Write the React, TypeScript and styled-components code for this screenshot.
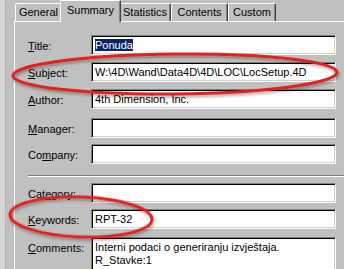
import React from "react";
import styled, { createGlobalStyle } from "styled-components";

const Global = createGlobalStyle`
  html, body {
    margin: 0;
    padding: 0;
    background: #c0c0c0;
    overflow: hidden;
  }
  body {
    font-family: "Liberation Sans", Arial, sans-serif;
    font-size: 11px;
    color: #000;
  }
`;

const Page = styled.div`
  position: relative;
  width: 344px;
  height: 269px;
  display: flex;
  overflow: hidden;
`;

const LeftStrip = styled.div`
  width: 5px;
  flex: none;
  background: #d6d6d6;
  border-right: 1px solid #b4b4b4;
`;

const Main = styled.div`
  flex: 1;
  padding-left: 8px;
  display: flex;
  flex-direction: column;
`;

const TabRow = styled.div`
  height: 24px;
  display: flex;
  align-items: flex-end;
  padding-left: 1px;
`;

const Tab = styled.div<{ $w: number; $active?: boolean }>`
  box-sizing: border-box;
  width: ${(p) => p.$w}px;
  height: ${(p) => (p.$active ? 22 : 18)}px;
  margin: 0 ${(p) => (p.$active ? -2 : 0)}px ${(p) => (p.$active ? -1 : 0)}px;
  position: relative;
  z-index: ${(p) => (p.$active ? 2 : 1)};
  background: #c0c0c0;
  border-top: 1px solid #fff;
  border-left: 1px solid #fff;
  border-right: 1px solid #404040;
  box-shadow: inset -1px 0 #808080;
  border-radius: 2px 2px 0 0;
  padding-top: ${(p) => (p.$active ? 3 : 2)}px;
  text-align: center;
  white-space: nowrap;
`;

const Panel = styled.div`
  flex: 1;
  border-top: 1px solid #fff;
  border-left: 1px solid #fff;
  margin-right: -20px;
  padding: 13px 0 0 13px;
  display: flex;
  flex-direction: column;
`;

const Row = styled.div<{ $top?: number }>`
  display: flex;
  align-items: flex-start;
  margin-top: ${(p) => p.$top ?? 0}px;
`;

const Label = styled.div`
  box-sizing: border-box;
  width: 63px;
  flex: none;
  height: 20px;
  line-height: 20px;
  padding-top: 1px;
  u {
    text-decoration: underline;
    text-underline-offset: 1px;
  }
`;

const Field = styled.div<{ $h?: number }>`
  box-sizing: border-box;
  width: 245px;
  height: ${(p) => p.$h ?? 20}px;
  background: #fff;
  border: 1px solid;
  border-color: #808080 #fff #fff #808080;
  box-shadow: inset 1px 1px #000, inset -1px -1px #d4d0c8;
  padding: 3px 3px 0 3px;
  line-height: 13px;
  white-space: pre;
`;

const Selected = styled.span`
  background: #0a246a;
  color: #fff;
`;

const Separator = styled.div`
  margin: 11px 0 6px 0;
  width: 322px;
  height: 1px;
  background: #808080;
  border-bottom: 1px solid #fff;
`;

const Overlay = styled.svg`
  position: absolute;
  left: 0;
  top: 0;
  pointer-events: none;
`;

const tabs = [
  { name: "General", w: 47 },
  { name: "Summary", w: 61, active: true },
  { name: "Statistics", w: 52 },
  { name: "Contents", w: 57 },
  { name: "Custom", w: 48 },
];

function Lbl({ k, rest, pre = "" }: { k: string; rest: string; pre?: string }) {
  return (
    <Label>
      {pre}
      <u>{k}</u>
      {rest}
    </Label>
  );
}

export default function App() {
  return (
    <Page>
      <Global />
      <LeftStrip />
      <Main>
        <TabRow>
          {tabs.map((t) => (
            <Tab key={t.name} $w={t.w} $active={t.active}>
              {t.name}
            </Tab>
          ))}
        </TabRow>
        <Panel>
          <Row>
            <Lbl k="T" rest="itle:" />
            <Field>
              <Selected>Ponuda</Selected>
            </Field>
          </Row>
          <Row $top={7}>
            <Lbl k="S" rest="ubject:" />
            <Field>W:\4D\Wand\Data4D\4D\LOC\LocSetup.4D</Field>
          </Row>
          <Row $top={7}>
            <Lbl k="A" rest="uthor:" />
            <Field>4th Dimension, Inc.</Field>
          </Row>
          <Row $top={9}>
            <Lbl k="M" rest="anager:" />
            <Field />
          </Row>
          <Row $top={6}>
            <Lbl pre="Co" k="m" rest="pany:" />
            <Field />
          </Row>
          <Separator />
          <Row>
            <Lbl pre="Cat" k="e" rest="gory:" />
            <Field />
          </Row>
          <Row $top={6}>
            <Lbl k="K" rest="eywords:" />
            <Field>RPT-32</Field>
          </Row>
          <Row $top={8}>
            <Lbl k="C" rest="omments:" />
            <Field $h={60}>{"Interni podaci o generiranju izvještaja.\nR_Stavke:1"}</Field>
          </Row>
        </Panel>
      </Main>
      <Overlay width={344} height={269} viewBox="0 0 344 269">
        <defs>
          <filter id="sh" x="-10%" y="-30%" width="120%" height="160%">
            <feDropShadow dx="1" dy="2" stdDeviation="1.5" floodColor="#000" floodOpacity="0.35" />
          </filter>
        </defs>
        <g fill="none" stroke="#e3201b" strokeWidth={3} filter="url(#sh)">
          <ellipse cx={175} cy={74} rx={162} ry={20} transform="rotate(-0.6 175 74)" />
          <ellipse cx={81} cy={217} rx={71} ry={20} transform="rotate(2 81 217)" />
        </g>
      </Overlay>
    </Page>
  );
}
